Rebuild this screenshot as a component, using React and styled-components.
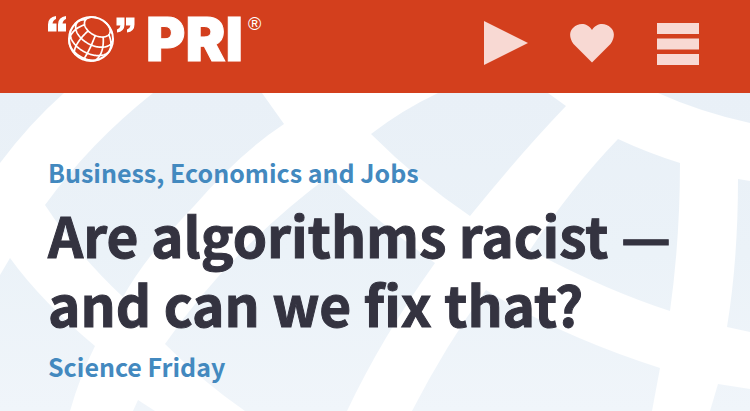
import React from "react";
import styled, { createGlobalStyle } from "styled-components";

const GlobalStyle = createGlobalStyle`
  *, *::before, *::after { box-sizing: border-box; }
  html, body, #root { min-height: 100vh; }
  body {
    margin: 0;
    background: #fff;
    font-family: "Noto Sans CJK JP", "Noto Sans", sans-serif;
  }
  #root { display: flex; flex-direction: column; }
`;

const Header = styled.header`
  display: flex;
  align-items: flex-start;
  justify-content: space-between;
  height: 93px;
  padding: 12px 51px 0 48px;
  background: #d33f1d;
`;

const Logo = styled.a`
  display: flex;
  align-items: flex-start;
  color: #fff;
  text-decoration: none;
`;

const LogoMark = styled.svg`
  display: block;
  width: 88px;
  height: 54px;
  margin-right: 10px;
`;

const Wordmark = styled.span`
  font: 900 60px/54px Inter, sans-serif;
  -webkit-text-stroke: 1px currentColor;
`;

const Registered = styled.sup`
  margin-left: 5px;
  font: 400 18px/24px "Liberation Sans", sans-serif;
`;

const Actions = styled.nav`
  display: flex;
  gap: 42px;
  padding-top: 8px;
`;

const IconButton = styled.button`
  display: flex;
  padding: 0;
  border: 0;
  background: none;
  color: #f8d9d3;
  cursor: pointer;
`;

const Icon = styled.svg`
  display: block;
  width: ${(p) => p.$width}px;
  height: 46px;
  fill: currentColor;
`;

const Hero = styled.main`
  position: relative;
  flex: 1;
  padding: 63px 48px 24px;
`;

const Backdrop = styled.svg`
  position: absolute;
  inset: 0;
  width: 100%;
  height: 100%;
`;

const Article = styled.article`
  position: relative;
  display: flex;
  flex-direction: column;
  align-items: flex-start;
`;

const TopicLink = styled.a`
  color: #4389bf;
  font-size: 25px;
  font-weight: 700;
  line-height: 32px;
  text-decoration: none;
`;

const Title = styled.h1`
  margin: 12px 0;
  color: #343340;
  font-size: 55px;
  font-weight: 700;
  line-height: 69px;
  -webkit-text-stroke: 1px currentColor;
`;

const rad = (deg) => (deg * Math.PI) / 180;
const RADIUS = 22;
const TILT = rad(38);
const ROLL = rad(28);

// Orthographic projection of a point on the globe; null on the far side.
function project(lat, lon) {
  const x = Math.cos(rad(lat)) * Math.sin(rad(lon));
  const y = Math.sin(rad(lat));
  const z = Math.cos(rad(lat)) * Math.cos(rad(lon));
  const up = y * Math.cos(TILT) - z * Math.sin(TILT);
  const depth = y * Math.sin(TILT) + z * Math.cos(TILT);
  if (depth < 0) return null;
  const px = x * Math.cos(ROLL) + up * Math.sin(ROLL);
  const py = up * Math.cos(ROLL) - x * Math.sin(ROLL);
  return `${(91 + RADIUS * px).toFixed(2)} ${(39 - RADIUS * py).toFixed(2)}`;
}

function trace(from, to, point) {
  let path = "";
  let drawing = false;
  for (let t = from; t <= to; t += 3) {
    const p = point(t);
    if (p) path += (drawing ? "L" : "M") + p;
    drawing = Boolean(p);
  }
  return path;
}

const GRATICULE = [
  ...[-30, -3, 24, 51].map((lat) => trace(-180, 180, (lon) => project(lat, lon))),
  ...[-135, -99, -63, -27, 9, 45, 81, 117, 153].map((lon) =>
    trace(-90, 51, (lat) => project(lat, lon))
  ),
].join("");

function Globe() {
  return (
    <LogoMark viewBox="48 12 88 54" aria-hidden="true">
      <g fill="#fff">
        <path d="M48 31.500V24.500Q48 17 56 16V19Q53 20 52.500 23.500H56.500V31.500Z" />
        <path d="M58 31.500V24.500Q58 17 66 16V19Q63 20 62.500 23.500H66V31.500Z" />
        <path d="M116.500 17.500H124.500V24.500Q124.500 31.500 117 32.500V29.500Q120 28.500 120.500 25.500H116.500Z" />
        <path d="M126 17.500H134.500V24.500Q134.500 31.500 127 32.500V29.500Q130 28.500 130.500 25.500H126Z" />
      </g>
      <g fill="none" stroke="#fff" strokeWidth="1.700">
        <circle cx="91" cy="39" r={RADIUS} strokeWidth="2" />
        <path d={GRATICULE} />
      </g>
    </LogoMark>
  );
}

const PANELS = [
  "M0 93H64Q30 123 0 163Z",
  "M153 93H262L284 124Q240 153 195 205Q145 257 123 297Q77 254 45 205Q90 143 153 93Z",
  "M10 258Q41 301 95 346Q80 376 70 411H0V275Z",
  "M329 176Q376 221 435 263Q382 337 347 411H245Q203 382 165 344Q230 250 329 176Z",
  "M138 400L155 411H133Z",
  "M438 93H548L566 106Q520 154 470 216Q418 181 371 134Q402 110 438 93Z",
  "M618 139Q648 153 680 163Q680 239 670 311Q605 290 530 250Q571 188 618 139Z",
  "M738 179L750 181V332L727 327Q738 260 738 179Z",
  "M658 93H750V123Q700 112 658 93Z",
  "M486 290Q560 336 660 368L652 411H412Q446 345 486 290Z",
  "M718 384L750 389V411H710Z",
];

function HeroBackdrop() {
  return (
    <Backdrop viewBox="0 93 750 318" preserveAspectRatio="xMidYMin slice" aria-hidden="true">
      <defs>
        <linearGradient id="panel" gradientUnits="userSpaceOnUse" x1="0" y1="93" x2="0" y2="411">
          <stop offset="0" stopColor="#e9f0f7" />
          <stop offset="0.5" stopColor="#ebf2f8" />
          <stop offset="1" stopColor="#f0f5fa" />
        </linearGradient>
      </defs>
      <g fill="url(#panel)">
        {PANELS.map((d) => (
          <path key={d} d={d} />
        ))}
      </g>
    </Backdrop>
  );
}

export default function App() {
  return (
    <>
      <GlobalStyle />
      <Header>
        <Logo href="#home">
          <Globe />
          <Wordmark>PRI</Wordmark>
          <Registered>®</Registered>
        </Logo>
        <Actions>
          <IconButton aria-label="Listen">
            <Icon $width={44} viewBox="0 0 44 46">
              <path d="M0 1L44 23L0 45Z" />
            </Icon>
          </IconButton>
          <IconButton aria-label="Donate">
            <Icon $width={45} viewBox="0 0 45 46">
              <path d="M22 42.500L3.500 24C-1 18 -1 11 3.500 7.500C8 3 17 2 22 10C27 2 36 3 40.500 7.500C45 11 45 18 40.500 24Z" />
            </Icon>
          </IconButton>
          <IconButton aria-label="Menu">
            <Icon $width={42} viewBox="0 0 42 46">
              <path d="M0 3H42V14H0ZM0 18.500H42V29.500H0ZM0 34H42V45H0Z" />
            </Icon>
          </IconButton>
        </Actions>
      </Header>
      <Hero>
        <HeroBackdrop />
        <Article>
          <TopicLink href="#business">Business, Economics and Jobs</TopicLink>
          <Title>Are algorithms racist — and can we fix that?</Title>
          <TopicLink href="#science-friday">Science Friday</TopicLink>
        </Article>
      </Hero>
    </>
  );
}
